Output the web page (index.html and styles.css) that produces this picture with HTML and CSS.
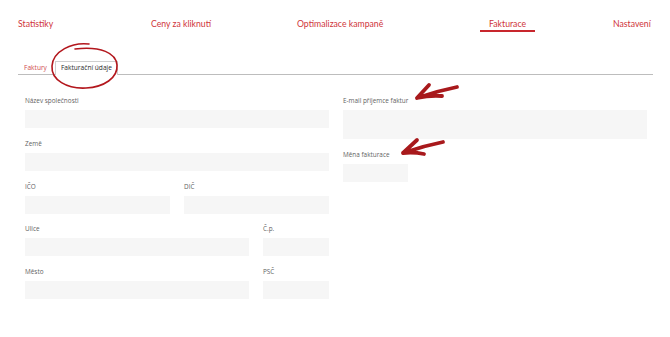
FILE: index.html
```html
<!DOCTYPE html>
<html lang="cs">
<head>
    <meta charset="UTF-8">
    <meta name="viewport" content="width=device-width, initial-scale=1.0">
    <title>Fakturace</title>
    <link rel="stylesheet" href="styles.css">
</head>
<body>
    <div class="page">
        <nav class="main-nav">
            <a class="nav-item">Statistiky</a>
            <a class="nav-item">Ceny za kliknutí</a>
            <a class="nav-item">Optimalizace kampaně</a>
            <a class="nav-item active">Fakturace</a>
            <a class="nav-item">Nastavení</a>
        </nav>

        <div class="tabs">
            <a class="tab">Faktury</a>
            <a class="tab active">Fakturační údaje</a>
        </div>

        <div class="billing-form">
            <div class="form-col">
                <div class="field">
                    <label>Název společnosti</label>
                    <div class="input"></div>
                </div>
                <div class="field">
                    <label>Země</label>
                    <div class="input"></div>
                </div>
                <div class="field-row half">
                    <div class="field">
                        <label>IČO</label>
                        <div class="input"></div>
                    </div>
                    <div class="field">
                        <label>DIČ</label>
                        <div class="input"></div>
                    </div>
                </div>
                <div class="field-row wide">
                    <div class="field">
                        <label>Ulice</label>
                        <div class="input"></div>
                    </div>
                    <div class="field">
                        <label>Č.p.</label>
                        <div class="input"></div>
                    </div>
                </div>
                <div class="field-row wide">
                    <div class="field">
                        <label>Město</label>
                        <div class="input"></div>
                    </div>
                    <div class="field">
                        <label>PSČ</label>
                        <div class="input"></div>
                    </div>
                </div>
            </div>
            <div class="form-col">
                <div class="field">
                    <label>E-mail příjemce faktur</label>
                    <div class="input tall"></div>
                </div>
                <div class="field">
                    <label>Měna fakturace</label>
                    <div class="input small"></div>
                </div>
            </div>
        </div>

        <!-- hand drawn annotations -->
        <svg class="marks" width="670" height="337" viewBox="0 0 670 337">
            <path class="circle" d="M89,44 C72,42 53,51 52,66 C51,80 67,89 86,88 C104,87 118,78 117,65 C116,53 101,46 75,49"/>
            <path class="arrow" d="M457,87 Q437,91 417,98 M417,98 L429,85 M417,98 Q430,95 442,96"/>
            <path class="arrow" d="M443,142 Q423,146 403,153 M403,153 L417,140 M403,153 Q414,152 424,154"/>
        </svg>
    </div>
</body>
</html>
```

FILE: styles.css
```css
* {
    margin: 0;
    padding: 0;
    box-sizing: border-box;
}

body, html {
    height: 100%;
    background-color: #fff;
    font-family: Lato, Arial, sans-serif;
    overflow: hidden;
}

.page {
    position: relative;
    width: 670px;
    height: 337px;
}

/* Top navigation */
.main-nav {
    display: grid;
    grid-template-columns: 133px 146px 192px 124px auto;
    padding: 18px 0 0 9px;
}

.nav-item {
    justify-self: start;
    padding: 0 9px;
    font-size: 8.7px;
    line-height: 12px;
    color: #cf353b;
    border-bottom: 2px solid transparent;
}

.nav-item.active {
    border-bottom-color: #c8262d;
}

/* Sub tabs */
.tabs {
    display: flex;
    align-items: flex-end;
    margin: 29px 17px 0 18px;
    padding-left: 6px;
    border-bottom: 1px solid #bdbdbd;
}

.tab {
    font-family: "Open Sans", sans-serif;
    font-size: 6.6px;
    line-height: 12px;
    color: #d04a4f;
    padding-right: 8px;
}

.tab.active {
    color: #2a2a2a;
    padding: 0 5px;
    border: 1px solid #cfcfcf;
    border-bottom: none;
    margin-bottom: -1px;
    background: #fff;
    height: 14px;
}

/* Form */
.billing-form {
    display: grid;
    grid-template-columns: 304px 304px;
    column-gap: 14px;
    padding: 21px 0 0 25px;
}

.field-row {
    display: grid;
    column-gap: 14px;
}

.field-row.half {
    grid-template-columns: 145px 145px;
}

.field-row.wide {
    grid-template-columns: 224px 66px;
}

.field {
    margin-bottom: 10.75px;
}

.field label {
    display: block;
    font-family: "Open Sans", sans-serif;
    font-size: 6.4px;
    line-height: 10px;
    color: #5f5f5f;
    margin-bottom: 4px;
}

.input {
    height: 18px;
    background: #f6f6f6;
}

.input.tall {
    height: 29px;
}

.input.small {
    width: 65px;
}

/* Annotations */
.marks {
    position: absolute;
    top: 0;
    left: 0;
    pointer-events: none;
}

.marks .circle {
    fill: none;
    stroke: #b3171d;
    stroke-width: 1.6;
    stroke-linecap: round;
}

.marks .arrow {
    fill: none;
    stroke: #a8191c;
    stroke-width: 3.8;
    stroke-linecap: round;
    stroke-linejoin: round;
}
```
